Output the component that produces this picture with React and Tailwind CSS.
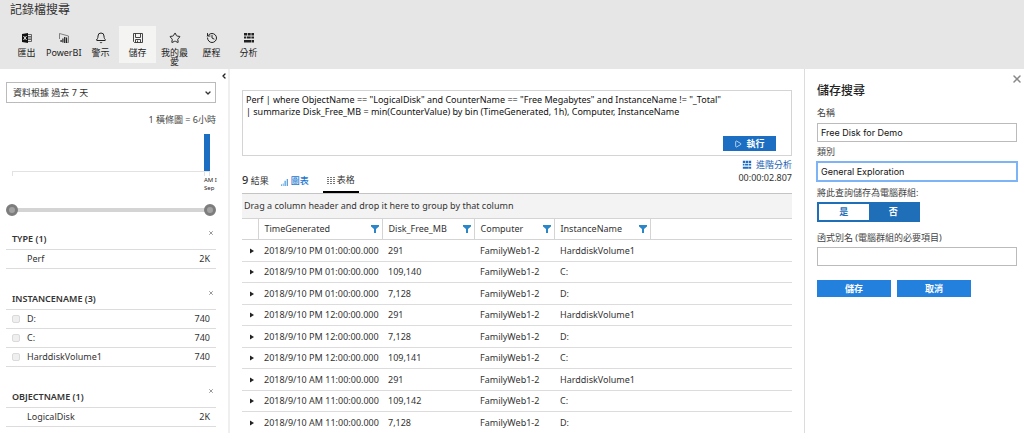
import React, { useState } from 'react';
import { Bell, ChevronLeft, History, Play, Star, X } from 'lucide-react';

const ROWS = [
  ['2018/9/10 PM 01:00:00.000', '291', 'FamilyWeb1-2', 'HarddiskVolume1'],
  ['2018/9/10 PM 01:00:00.000', '109,140', 'FamilyWeb1-2', 'C:'],
  ['2018/9/10 PM 01:00:00.000', '7,128', 'FamilyWeb1-2', 'D:'],
  ['2018/9/10 PM 12:00:00.000', '291', 'FamilyWeb1-2', 'HarddiskVolume1'],
  ['2018/9/10 PM 12:00:00.000', '7,128', 'FamilyWeb1-2', 'D:'],
  ['2018/9/10 PM 12:00:00.000', '109,141', 'FamilyWeb1-2', 'C:'],
  ['2018/9/10 AM 11:00:00.000', '291', 'FamilyWeb1-2', 'HarddiskVolume1'],
  ['2018/9/10 AM 11:00:00.000', '109,142', 'FamilyWeb1-2', 'C:'],
  ['2018/9/10 AM 11:00:00.000', '7,128', 'FamilyWeb1-2', 'D:'],
];

const COLUMNS = ['TimeGenerated', 'Disk_Free_MB', 'Computer', 'InstanceName'];

const QUERY = `Perf | where ObjectName == "LogicalDisk" and CounterName == "Free Megabytes" and InstanceName != "_Total"
| summarize Disk_Free_MB = min(CounterValue) by bin (TimeGenerated, 1h), Computer, InstanceName`;

const FACETS = [
  { name: 'TYPE', items: [['Perf', '2K']] },
  { name: 'INSTANCENAME', items: [['D:', '740'], ['C:', '740'], ['HarddiskVolume1', '740']] },
  { name: 'OBJECTNAME', items: [['LogicalDisk', '2K']] },
];

function ExcelIcon() {
  return (
    <svg viewBox="0 0 12 12" className="size-3 shrink-0">
      <path d="M1 2 7 1v10L1 10z" fill="#111" />
      <path d="m2.5 4 3 4m0-4-3 4" stroke="#e6e6e6" fill="none" />
      <path d="M7 2.5h3.5v7H7M7 4.5h3M7 6h3M7 7.5h3" stroke="#444" strokeWidth=".8" fill="none" />
    </svg>
  );
}

function PowerBIIcon() {
  return (
    <svg viewBox="0 0 12 12" className="size-3 shrink-0">
      <path d="M1.500 7V1.500L10.500 4v6.500H9.500" stroke="#666" strokeWidth=".8" fill="none" />
      <path d="M2.500 8h1.200v2H2.500zM4.300 6.500h1.200v4H4.300zM6.100 5h1.300v6H6.100zM8 5.500h1.200v5.500H8z" fill="#222" />
    </svg>
  );
}

function SaveIcon() {
  return (
    <svg viewBox="0 0 12 12" className="size-3 shrink-0" fill="none" stroke="#333" strokeWidth=".9">
      <path d="M1.500 1.500h9v9h-8l-1-1zM3.500 1.500v4h5v-4M3.500 10.500v-3h5v3M5.500 8.500v2" />
    </svg>
  );
}

function AnalyticsIcon({ className = 'size-3' }) {
  return (
    <svg viewBox="0 0 12 12" className={`shrink-0 ${className}`} fill="currentColor">
      <path d="M1 1h3v2.500H1zM4.700 1h3v2.500h-3zM8.400 1H11v2.500H8.400zM1 4.500h2v2H1zM3.700 4.500h4v2h-4zM8.400 4.500H11v2H8.400zM1 8h7v2.500H1zM8.500 8H11v2.500H8.500z" />
    </svg>
  );
}

function BarsIcon() {
  return (
    <svg viewBox="0 0 8 8" className="mt-0.5 size-[7px]" fill="#5ba3e0">
      <path d="M0 6h1v2H0zM2 5h1v3H2zM4 2h1.500v6H4zM6.500 0H8v8H6.500z" />
    </svg>
  );
}

function GridIcon() {
  return (
    <svg viewBox="0 0 8 8" className="size-2" fill="#777">
      <path d="M0 1h2v1H0zM3 1h2v1H3zM6 1h2v1H6zM0 3h2v1H0zM3 3h2v1H3zM6 3h2v1H6zM0 5h2v1H0zM3 5h2v1H3zM6 5h2v1H6zM0 7h2v1H0zM3 7h2v1H3zM6 7h2v1H6z" />
    </svg>
  );
}

function FilterIcon() {
  return (
    <svg viewBox="0 0 8 8" className="block size-2" fill="#2a86c8">
      <path d="M0 0h8v1.500L5 4v4H3V4L0 1.500z" />
    </svg>
  );
}

const TOOLS = [
  { label: '匯出', icon: <ExcelIcon /> },
  { label: 'PowerBI', icon: <PowerBIIcon /> },
  { label: '警示', icon: <Bell className="size-3 shrink-0" strokeWidth={2} /> },
  { label: '儲存', icon: <SaveIcon />, active: true },
  { label: '我的最愛', icon: <Star className="size-3 shrink-0" strokeWidth={2} /> },
  { label: '歷程', icon: <History className="size-3 shrink-0" strokeWidth={2} /> },
  { label: '分析', icon: <AnalyticsIcon /> },
];

function Header() {
  return (
    <header className="h-[69px] bg-[#e6e6e6]">
      <h1 className="px-2.5 pt-0.5 text-[12px] leading-4 text-[#333]">記錄檔搜尋</h1>
      <nav className="mt-2 flex px-2">
        {TOOLS.map((tool) => (
          <button
            key={tool.label}
            className={`flex h-[37px] w-[37px] flex-col items-center justify-start pt-1.5 text-[#222] ${tool.active ? 'bg-[#f4f4f2]' : ''}`}
          >
            {tool.icon}
            <span className="mt-1 w-[35px] text-center leading-[9px]">{tool.label}</span>
          </button>
        ))}
      </nav>
    </header>
  );
}

const RANGE =
  'pointer-events-none absolute inset-0 m-0 h-3 w-full appearance-none bg-transparent [&::-webkit-slider-thumb]:pointer-events-auto [&::-webkit-slider-thumb]:size-3 [&::-webkit-slider-thumb]:appearance-none [&::-webkit-slider-thumb]:rounded-full [&::-webkit-slider-thumb]:border-3 [&::-webkit-slider-thumb]:border-[#7d7d7d] [&::-webkit-slider-thumb]:bg-[#a3a3a3]';

function Sidebar() {
  return (
    <aside className="w-[230px] shrink-0 border-r-2 border-[#efefef]">
      <div className="flex h-[13px] items-center justify-end">
        <button aria-label="收合"><ChevronLeft className="size-2 text-[#222]" strokeWidth={4} /></button>
      </div>
      <div className="pl-1.5 pr-3">
        <div className="grid items-center">
          <select aria-label="時間範圍" className="col-start-1 row-start-1 h-[21px] appearance-none border border-[#bbb] bg-white px-1.5 text-[9px] text-[#333]">
            <option>資料根據 過去 7 天</option>
          </select>
          <ChevronLeft className="pointer-events-none col-start-1 row-start-1 mr-1 size-2 -rotate-90 justify-self-end text-[#333]" strokeWidth={4} />
        </div>
        <p className="mt-[11px] text-right leading-3 text-[#444]">1 橫條圖 = 6小時</p>
        <div className="mt-2 px-1.5">
          <div className="flex h-[38px] justify-end border-b border-[#e2e2e2]">
            <div className="w-1.5 bg-[#1b6ec2]" />
          </div>
          <div className="flex h-1 justify-end border-l border-[#e2e2e2]">
            <span className="w-1.5 border-x border-[#e2e2e2]" />
          </div>
        </div>
        <div className="flex justify-end">
          <div className="h-4 w-3 text-[6px] leading-2 whitespace-nowrap text-[#222]">
            AM I
            <br />
            Sep
          </div>
        </div>
        <div className="relative mt-3 flex h-3 items-center">
          <div className="mx-1.5 h-1 flex-1 bg-[#d4d4d4]" />
          <input type="range" aria-label="開始" defaultValue={0} className={RANGE} />
          <input type="range" aria-label="結束" defaultValue={100} className={RANGE} />
        </div>
        <div className="mt-[13px] flex flex-col gap-5">
          {FACETS.map((facet) => (
            <section key={facet.name}>
              <div className="flex h-[21px] justify-between border-b border-[#dcdcdc] pl-1.5 pr-0.5">
                <h2 className="pt-1 font-semibold leading-3">{facet.name} ({facet.items.length})</h2>
                <button aria-label="移除" className="h-2"><X className="size-1.5 text-[#777]" strokeWidth={3} /></button>
              </div>
              {facet.items.map(([name, count]) => (
                <label key={name} className="flex h-[19px] items-center border-b border-[#dcdcdc] px-1.5">
                  <span className="w-[15px]">
                    {facet.items.length > 1 && (
                      <input type="checkbox" className="block size-2 appearance-none rounded-[2px] border border-[#dadada] bg-[#efefef]" />
                    )}
                  </span>
                  <span className="flex-1">{name}</span>
                  <span>{count}</span>
                </label>
              ))}
            </section>
          ))}
        </div>
      </div>
    </aside>
  );
}

function ResultsTable() {
  return (
    <table className="w-full table-fixed border-collapse text-left">
      <colgroup>
        <col className="w-4" />
        <col className="w-[124px]" />
        <col className="w-[92px]" />
        <col className="w-20" />
        <col className="w-24" />
        <col />
      </colgroup>
      <thead>
        <tr className="h-[21px] border-y border-[#d4d4d4]">
          <th className="border-r border-[#d4d4d4]" />
          {COLUMNS.map((col) => (
            <th key={col} className="border-r border-[#d4d4d4] p-0 pl-1.5 pr-[3px] font-normal">
              <div className="flex items-center justify-between">
                {col}
                <button aria-label={`篩選 ${col}`}><FilterIcon /></button>
              </div>
            </th>
          ))}
          <th />
        </tr>
      </thead>
      <tbody>
        {ROWS.map((row, i) => (
          <tr key={i} className="border-b border-[#dcdcdc] odd:h-[22px] even:h-[21px]">
            <td className="p-0 pl-2">
              <button aria-label="展開" className="block">
                <svg viewBox="0 0 4 6" className="h-1.5 w-1" fill="#222"><path d="M0 .5 4 3 0 5.500z" /></svg>
              </button>
            </td>
            {row.map((cell, j) => (
              <td key={j} className="p-0 pl-1.5 whitespace-nowrap">{cell}</td>
            ))}
            <td />
          </tr>
        ))}
      </tbody>
    </table>
  );
}

function Results() {
  return (
    <main className="min-w-0 flex-1 px-3 pt-[21px]">
      <div className="flex h-[66px] flex-col border border-[#d4d4d4]">
        <textarea
          aria-label="查詢"
          defaultValue={QUERY}
          className="block w-full flex-1 resize-none overflow-hidden px-[3px] pt-[3px] leading-3 text-[#111] outline-none"
        />
        <button className="mr-[15px] mb-1 flex h-[15px] w-[53px] items-center justify-center gap-1 self-end bg-[#1b6ec2] font-bold text-white">
          <Play className="size-2" strokeWidth={2} />
          執行
        </button>
      </div>
      <div className="flex h-[37px] justify-between">
        <div className="flex items-end">
          <p className="mr-3 pb-1.5 leading-3"><span className="text-[11px] font-medium">9</span> 結果</p>
          <button className="flex h-6 items-center gap-[3px] font-medium text-[#1b76d0]"><BarsIcon />圖表</button>
          <button className="ml-3.5 flex h-6 items-center gap-0.5 border-b-2 border-black px-1"><GridIcon />表格</button>
        </div>
        <div className="flex flex-col items-end pt-[3px]">
          <a href="#advanced" className="flex items-center gap-1 leading-3 text-[#1b5fb4]">
            <AnalyticsIcon className="size-2.5 text-[#1b6ec2]" />
            進階分析
          </a>
          <span className="leading-[14px]">00:00:02.807</span>
        </div>
      </div>
      <div className="flex h-[25px] items-center border-t border-[#c4c4c4] bg-[#f3f3f3] px-0.5">
        Drag a column header and drop it here to group by that column
      </div>
      <ResultsTable />
    </main>
  );
}

const FIELD = "block h-[19px] w-full border bg-white px-[3px] font-['Inter',sans-serif] text-[#111] outline-none focus:border-[#7db4f5] focus:ring-1 focus:ring-[#7db4f5]";

function SavePanel() {
  const [group, setGroup] = useState(false);
  const on = 'bg-[#1f6fb8] text-white';
  const off = 'bg-white text-[#1f6fb8]';

  return (
    <form className="flex w-[220px] shrink-0 flex-col border-l border-[#dcdcdc] pr-[7px] pl-3 leading-3 text-[#444]" onSubmit={(e) => e.preventDefault()}>
      <button type="button" aria-label="關閉" className="-mr-1.5 mt-1 self-end"><X className="size-3 text-[#888]" strokeWidth={3} /></button>
      <h2 className="-mt-0.5 text-[12px] font-medium leading-4 text-[#222]">儲存搜尋</h2>
      <label htmlFor="name" className="mt-2 mb-1">名稱</label>
      <input id="name" defaultValue="Free Disk for Demo" className={`${FIELD} border-[#bbb]`} />
      <label htmlFor="category" className="mt-1 mb-1">類別</label>
      <input id="category" defaultValue="General Exploration" className={`${FIELD} border-[#7db4f5] ring-1 ring-[#7db4f5]`} />
      <span className="mt-1.5 mb-[3px]">將此查詢儲存為電腦群組:</span>
      <div className="flex h-5 w-[103px] border-2 border-[#1f6fb8] font-bold">
        <button type="button" aria-pressed={group} onClick={() => setGroup(true)} className={`flex-1 ${group ? on : off}`}>是</button>
        <button type="button" aria-pressed={!group} onClick={() => setGroup(false)} className={`flex-1 ${group ? off : on}`}>否</button>
      </div>
      <label htmlFor="alias" className="mt-2.5 mb-[3px]">函式別名 (電腦群組的必要項目)</label>
      <input id="alias" className={`${FIELD} border-[#bbb]`} />
      <div className="mt-3.5 flex gap-1.5 font-bold text-white">
        <button className="h-[17px] w-[74px] bg-[#2480dd]">儲存</button>
        <button type="button" className="h-[17px] w-[74px] bg-[#2480dd]">取消</button>
      </div>
    </form>
  );
}

export default function App() {
  return (
    <div className="flex min-h-screen flex-col bg-white font-['Noto_Sans','Noto_Sans_CJK_TC',sans-serif] text-[9px] leading-3 text-[#333]">
      <Header />
      <div className="flex flex-1">
        <Sidebar />
        <Results />
        <SavePanel />
      </div>
    </div>
  );
}
